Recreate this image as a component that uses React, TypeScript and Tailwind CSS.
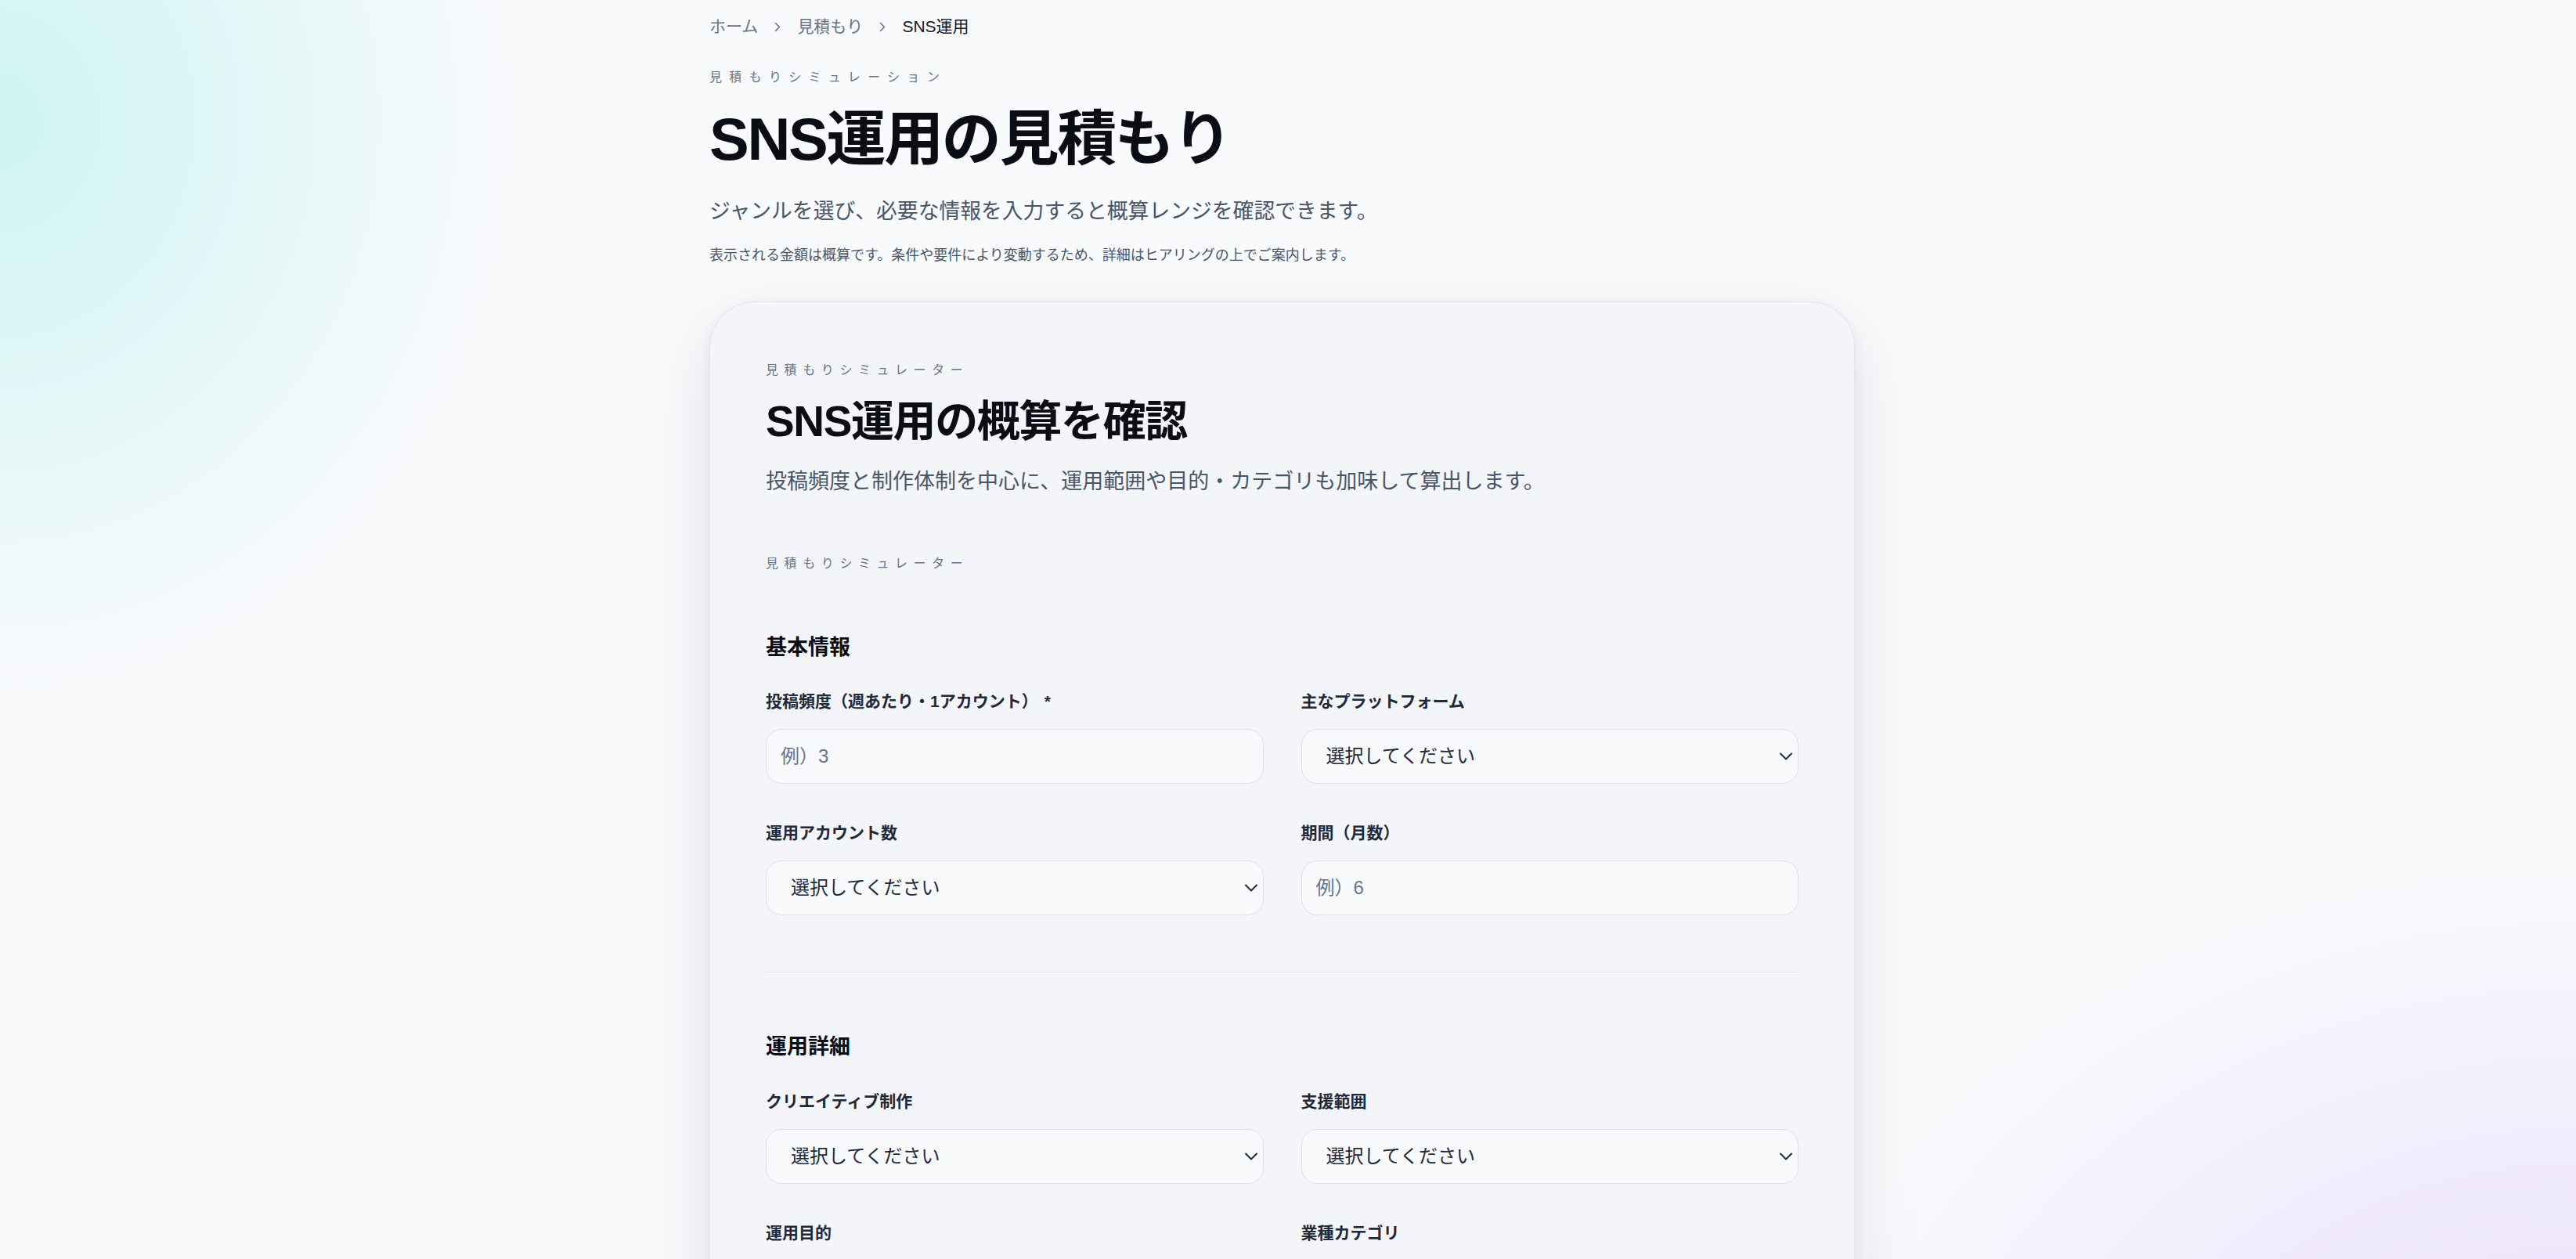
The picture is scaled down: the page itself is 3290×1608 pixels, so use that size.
import React from "react";

function Crumb() {
  return (
    <svg width="8" height="13" viewBox="0 0 8 13" fill="none" className="shrink-0">
      <path d="M1.5 1.5l5 5-5 5" stroke="#64748b" strokeWidth="1.6" strokeLinecap="round" strokeLinejoin="round" />
    </svg>
  );
}

function Chevron() {
  return (
    <svg width="16" height="10" viewBox="0 0 16 10" fill="none" className="pointer-events-none absolute right-[8px] top-1/2 -translate-y-1/2">
      <path d="M1 1.5l7 7 7-7" stroke="#1f2937" strokeWidth="2" strokeLinecap="round" strokeLinejoin="round" />
    </svg>
  );
}

function Label({ children, required }: { children: React.ReactNode; required?: boolean }) {
  return (
    <span className="block text-[21px] leading-[30px] font-semibold text-[#1e293b]">
      {children}
      {required && <span className="ml-[8px]">*</span>}
    </span>
  );
}

function TextField({ label, placeholder, required }: { label: string; placeholder: string; required?: boolean }) {
  return (
    <label className="block">
      <Label required={required}>{label}</Label>
      <input
        type="text"
        placeholder={placeholder}
        className="mt-[20px] block h-[70px] w-full rounded-[20px] border border-[#dde1e7] bg-[#f8f9fb] pl-[18px] text-[24px] text-[#1e293b] outline-none placeholder:text-[#64748b]"
      />
    </label>
  );
}

function SelectField({ label }: { label: string }) {
  return (
    <label className="block">
      <Label>{label}</Label>
      <div className="relative mt-[20px]">
        <select
          defaultValue=""
          className="block h-[70px] w-full appearance-none rounded-[20px] border border-[#dde1e7] bg-[#f8f9fb] pl-[31px] pr-[40px] text-[24px] text-[#1e293b] outline-none"
        >
          <option value="">選択してください</option>
        </select>
        <Chevron />
      </div>
    </label>
  );
}

export default function App() {
  return (
    <div className="min-h-screen w-full bg-[#f8fafc] bg-[radial-gradient(ellipse_900px_1000px_at_0%_8%,rgba(178,240,234,0.62),rgba(248,250,252,0)_72%),radial-gradient(ellipse_1500px_1200px_at_100%_100%,rgba(230,216,252,0.95),rgba(248,250,252,0)_68%)] font-['Liberation_Sans','Noto_Sans_CJK_JP',sans-serif] text-[#0f172a]">
      <div className="pr-[15px]">
        <main className="mx-auto w-[1463px] pb-[160px]">
          <nav className="flex items-center gap-[21px] pt-[18px] text-[21px] leading-[32px] text-[#64748b]">
            <span>ホーム</span>
            <Crumb />
            <span>見積もり</span>
            <Crumb />
            <span className="text-[#111827]">SNS運用</span>
          </nav>

          <p className="mt-[37px] text-[16px] leading-[24px] tracking-[9.3px] text-[#64748b]">見積もりシミュレーション</p>
          <h1 className="mt-[21px] text-[76px] leading-[91px] font-bold tracking-[-0.03em] text-[#0a0d14]">SNS運用の見積もり</h1>
          <p className="mt-[27px] text-[26.8px] leading-[40px] text-[#475569]">
            ジャンルを選び、必要な情報を入力すると概算レンジを確認できます。
          </p>
          <p className="mt-[22px] text-[18px] leading-[28px] text-[#475569]">
            表示される金額は概算です。条件や要件により変動するため、詳細はヒアリングの上でご案内します。
          </p>

          <section className="mt-[45px] rounded-[58px] border border-[#e3e6eb] bg-[#f3f5f8] px-[71px] pt-[75px] pb-[90px] shadow-[0_30px_90px_rgba(15,23,42,0.10),0_4px_16px_rgba(15,23,42,0.05)]">
            <p className="text-[16px] leading-[24px] tracking-[7.6px] text-[#64748b]">見積もりシミュレーター</p>
            <h2 className="mt-[21px] text-[55px] leading-[64px] font-bold tracking-[-0.025em] text-[#0a0d14]">SNS運用の概算を確認</h2>
            <p className="mt-[25px] text-[27px] leading-[40px] text-[#475569]">
              投稿頻度と制作体制を中心に、運用範囲や目的・カテゴリも加味して算出します。
            </p>

            <p className="mt-[73px] text-[16px] leading-[24px] tracking-[7.6px] text-[#64748b]">見積もりシミュレーター</p>

            <div className="mt-[77px]">
              <h3 className="text-[27px] leading-[36px] font-bold text-[#0a0d14]">基本情報</h3>
              <div className="mt-[36px] grid grid-cols-2 gap-x-[48px] gap-y-[48px]">
                <TextField label="投稿頻度（週あたり・1アカウント）" placeholder="例）3" required />
                <SelectField label="主なプラットフォーム" />
                <SelectField label="運用アカウント数" />
                <TextField label="期間（月数）" placeholder="例）6" />
              </div>
            </div>

            <div className="mt-[72px] border-t border-[#e6e8ec] pt-[77px]">
              <h3 className="text-[27px] leading-[36px] font-bold text-[#0a0d14]">運用詳細</h3>
              <div className="mt-[37px] grid grid-cols-2 gap-x-[48px] gap-y-[48px]">
                <SelectField label="クリエイティブ制作" />
                <SelectField label="支援範囲" />
                <SelectField label="運用目的" />
                <SelectField label="業種カテゴリ" />
              </div>
            </div>
          </section>
        </main>
      </div>
    </div>
  );
}
